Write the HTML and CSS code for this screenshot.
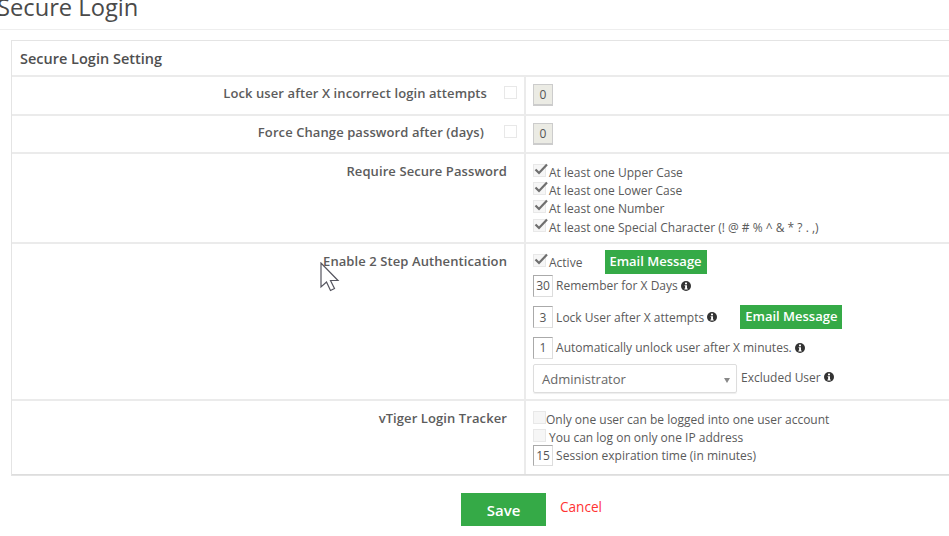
FILE: index.html
```html
<!DOCTYPE html>
<html lang="en">
<head>
    <meta charset="UTF-8">
    <title>Secure Login</title>
    <link rel="stylesheet" href="styles.css">
</head>
<body>
    <svg width="0" height="0" class="defs">
        <symbol id="tick" viewBox="0 0 14 12"><path d="M1.5 6.5 L5 10 L13 1.5" fill="none" stroke="#6f6f6f" stroke-width="2.2"/></symbol>
        <symbol id="info" viewBox="0 0 10 10"><circle cx="5" cy="5" r="5" fill="#333"/><rect x="4" y="1.6" width="2" height="1.7" fill="#fff"/><path d="M3.6 4.2H6V7.5H6.7V8.4H3.4V7.5H4.1V5.1H3.6Z" fill="#fff"/></symbol>
    </svg>

    <h1 class="page-title">Secure Login</h1>

    <div class="settings">
        <div class="settings-head">Secure Login Setting</div>

        <div class="row row-first">
            <div class="label label-inline">Lock user after X incorrect login attempts <span class="check check-side"></span></div>
            <div class="value value-short"><input class="num num-off" value="0" disabled></div>
        </div>

        <div class="row row-second">
            <div class="label label-inline label-force">Force Change password after (days) <span class="check check-side"></span></div>
            <div class="value value-short"><input class="num num-off" value="0" disabled></div>
        </div>

        <div class="row row-password">
            <div class="label">Require Secure Password</div>
            <div class="value value-list">
                <div class="line"><span class="check"><svg class="tick"><use href="#tick"/></svg></span>At least one Upper Case</div>
                <div class="line"><span class="check"><svg class="tick"><use href="#tick"/></svg></span>At least one Lower Case</div>
                <div class="line"><span class="check"><svg class="tick"><use href="#tick"/></svg></span>At least one Number</div>
                <div class="line"><span class="check"><svg class="tick"><use href="#tick"/></svg></span>At least one Special Character (! @ # % ^ &amp; * ? . ,)</div>
            </div>
        </div>

        <div class="row row-auth">
            <div class="label">Enable 2 Step Authentication</div>
            <div class="value value-auth">
                <div class="line line-active"><span class="check"><svg class="tick"><use href="#tick"/></svg></span>Active <a class="btn-mail btn-first">Email Message</a></div>
                <div class="line line-days"><input class="num" value="30"> Remember for X Days <svg class="info"><use href="#info"/></svg></div>
                <div class="line line-attempts"><input class="num" value="3"> Lock User after X attempts <svg class="info"><use href="#info"/></svg> <a class="btn-mail btn-second">Email Message</a></div>
                <div class="line line-unlock"><input class="num" value="1"> Automatically unlock user after X minutes. <svg class="info"><use href="#info"/></svg></div>
                <div class="line line-user">
                    <div class="select">Administrator<span class="caret"></span></div>
                    <span class="excluded">Excluded User <svg class="info"><use href="#info"/></svg></span>
                </div>
            </div>
        </div>

        <div class="row row-tracker">
            <div class="label">vTiger Login Tracker</div>
            <div class="value value-list">
                <div class="line"><span class="check check-flush"></span>Only one user can be logged into one user account</div>
                <div class="line"><span class="check"></span>You can log on only one IP address</div>
                <div class="line"><input class="num num-small" value="15"> Session expiration time (in minutes)</div>
            </div>
        </div>
    </div>

    <div class="actions">
        <button class="btn-save">Save</button>
        <a class="cancel">Cancel</a>
    </div>

    <!-- mouse pointer caught in the screenshot -->
    <svg class="pointer" width="20" height="30" viewBox="0 0 20 30">
        <path d="M1 1 L1 25 L6.5 20 L10.5 28.5 L14.5 26.5 L10.5 18.5 L18 18.5 Z" fill="#fff" stroke="#55555f" stroke-width="1.2"/>
    </svg>
</body>
</html>
```

FILE: styles.css
```css
body {
    margin: 0;
    height: 536px;
    overflow: hidden;
    background: #fff;
    font-family: "Open Sans", sans-serif;
    font-size: 12px;
    color: #5a5a5a;
    position: relative;
}

.defs {
    display: block;
}

.page-title {
    margin: -9px 0 0;
    padding-bottom: 6px;
    height: 32px;
    line-height: 32px;
    font-size: 23.7px;
    font-weight: 400;
    color: #4a4a4a;
    border-bottom: 1px solid #eee;
    text-indent: -3px;
}

.settings {
    margin: 10px 0 0 11px;
    border: 1px solid #e4e4e4;
    border-right: none;
}

.settings-head {
    height: 34px;
    line-height: 35px;
    padding-left: 8px;
    font-size: 14.5px;
    font-weight: 600;
    color: #4f4f4f;
    border-bottom: 2px solid #ebebeb;
}

.row {
    display: grid;
    grid-template-columns: 512px 1fr;
    border-bottom: 2px solid #ebebeb;
}

.row:last-child {
    border-bottom: 1px solid #ddd;
}

.row-first {
    height: 37px;
}

.row-second {
    height: 36px;
}

.row-password {
    height: 88px;
}

.row-auth {
    height: 155px;
}

.row-tracker {
    height: 73px;
}

.label {
    padding: 8px 17px 0 0;
    text-align: right;
    font-size: 13px;
    font-weight: 600;
    line-height: 18px;
    color: #5c5c5c;
    letter-spacing: 0.09px;
}

.label-inline {
    padding: 7px 37px 0 0;
    position: relative;
}

.label-force {
    padding-right: 40px;
}

.value {
    border-left: 2px solid #ebebeb;
    padding-left: 7px;
}

.value-short {
    padding-top: 7px;
}

.value-list {
    padding-top: 9px;
}

.line {
    display: flex;
    align-items: center;
    height: 18.4px;
    white-space: pre;
}

.check {
    display: inline-block;
    width: 13px;
    height: 13px;
    background: #f6f6f6;
    border: 1px solid #e8e8e8;
    box-sizing: border-box;
    position: relative;
    top: -2px;
    margin-right: 3px;
    flex: none;
}

.check-side {
    position: absolute;
    right: 4px;
    top: 9px;
    background: #fff;
}

.check-flush {
    margin-right: 0;
}

.tick {
    position: absolute;
    left: 0;
    top: -2px;
    width: 14px;
    height: 12px;
}

.num {
    width: 20px;
    height: 22px;
    box-sizing: border-box;
    padding: 0;
    border: 1px solid #ddd;
    border-top-color: #aaa;
    border-left-color: #aaa;
    background: #fff;
    font: 12px "Open Sans", sans-serif;
    color: #555;
    text-align: center;
}

.num-off {
    background: #ebebe4;
    border-color: #ccc;
    border-bottom-width: 2px;
}

.num-small {
    height: 21px;
}

.info {
    width: 10px;
    height: 10px;
}

.btn-mail {
    display: inline-block;
    height: 24px;
    line-height: 23px;
    width: 102px;
    text-align: center;
    background: #35aa47;
    color: #fff;
    font-size: 13px;
    font-weight: 600;
}

.btn-first {
    margin-left: 19px;
}

.btn-second {
    margin-left: 23px;
}

.value-auth {
    padding-top: 6px;
}

.line-active {
    height: 24px;
}

.line-days {
    height: 23px;
}

.line-attempts {
    height: 24px;
    margin-top: 8px;
}

.line-unlock {
    height: 23px;
    margin-top: 7px;
}

.line-user {
    height: 29px;
    margin-top: 5px;
}

.select {
    width: 204px;
    height: 29px;
    box-sizing: border-box;
    border: 1px solid #ddd;
    border-radius: 2px;
    padding-left: 8px;
    line-height: 28px;
    font-size: 13px;
    color: #666;
    position: relative;
    box-shadow: 0 1px 1px #eee;
}

.caret {
    position: absolute;
    right: 6px;
    top: 13px;
    border: 3px solid transparent;
    border-top: 5px solid #888;
    border-bottom: none;
}

.excluded {
    margin-left: 4px;
    position: relative;
    top: -1px;
}

.actions {
    display: flex;
    align-items: flex-start;
    margin: 17px 0 0 461px;
}

.btn-save {
    width: 85px;
    height: 33px;
    border: none;
    background: #35aa47;
    color: #fff;
    font: 600 15px "Open Sans", sans-serif;
}

.cancel {
    margin-left: 14px;
    line-height: 28px;
    font-size: 13.6px;
    color: #f33;
}

.pointer {
    position: absolute;
    left: 320px;
    top: 262px;
}
```
